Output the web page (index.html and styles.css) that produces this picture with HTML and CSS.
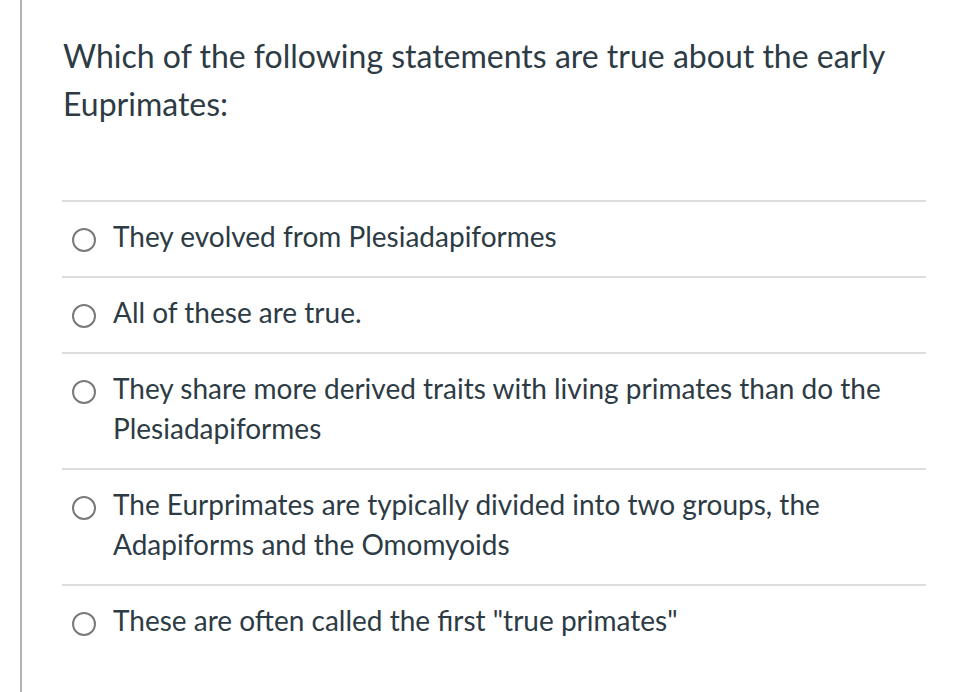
FILE: index.html
```html
<!DOCTYPE html>
<html>
<head>
<meta charset="utf-8">
<link rel="stylesheet" href="styles.css">
</head>
<body>
<div class="question">
  <div class="question-text">Which of the following statements are true about the early Euprimates:</div>
  <div class="answers">
    <label class="answer"><span class="radio"></span><span class="answer-text">They evolved from Plesiadapiformes</span></label>
    <label class="answer"><span class="radio"></span><span class="answer-text">All of these are true.</span></label>
    <label class="answer"><span class="radio"></span><span class="answer-text">They share more derived traits with living primates than do the Plesiadapiformes</span></label>
    <label class="answer"><span class="radio"></span><span class="answer-text">The Eurprimates are typically divided into two groups, the Adapiforms and the Omomyoids</span></label>
    <label class="answer"><span class="radio"></span><span class="answer-text">These are often called the first "true primates"</span></label>
  </div>
</div>
</body>
</html>
```
FILE: styles.css
```css
html, body {
  margin: 0;
  padding: 0;
  background: #ffffff;
}
body {
  font-family: Lato, "Liberation Sans", sans-serif;
  color: #2d3b45;
}
.question {
  margin-left: 20px;
  border-left: 2px solid #b3b3b3;
  min-height: 692px;
  box-sizing: border-box;
  padding: 32px 30px 0 40px;
}
.question-text {
  font-size: 32px;
  line-height: 48px;
  padding-left: 1px;
  padding-right: 20px;
  margin-bottom: 72px;
}
.answers {
  display: flex;
  flex-direction: column;
}
.answer {
  display: flex;
  align-items: flex-start;
  border-top: 2px solid #dddddd;
  padding: 14px 0 20px 10px;
  font-size: 28px;
  line-height: 40px;
}
.radio {
  flex: none;
  width: 20px;
  height: 20px;
  border: 2px solid #7a7a7a;
  border-radius: 50%;
  margin-top: 12px;
  margin-right: 17px;
}
.answer-text {
  padding-right: 40px;
}
```
